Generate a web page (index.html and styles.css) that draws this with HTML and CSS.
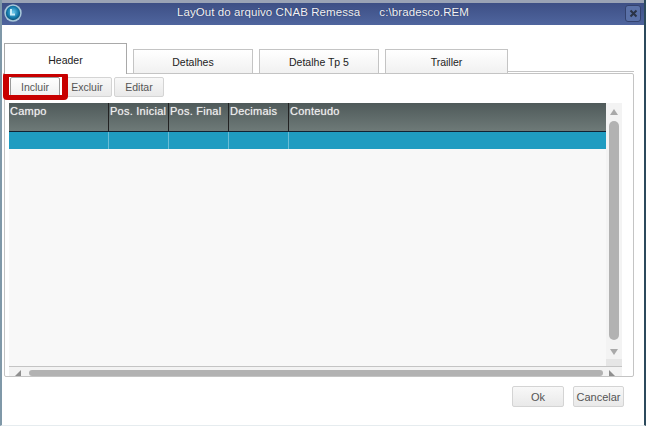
FILE: index.html
```html
<!DOCTYPE html>
<html lang="pt">
<head>
<meta charset="utf-8">
<title>LayOut do arquivo CNAB Remessa</title>
<link rel="stylesheet" href="styles.css">
</head>
<body>
<div class="window">
  <header class="titlebar">
    <svg class="logo" width="18" height="18" viewBox="0 0 18 18">
      <defs><radialGradient id="g" cx="50%" cy="45%" r="60%"><stop offset="0" stop-color="#6fcdf0"/><stop offset="0.65" stop-color="#1277a8"/><stop offset="1" stop-color="#0b4467"/></radialGradient></defs>
      <circle cx="9" cy="9" r="8.7" fill="#a9c8da"/>
      <circle cx="9" cy="9" r="7.2" fill="url(#g)"/>
      <path d="M7 5v5.5h4" fill="none" stroke="#c9ecf8" stroke-width="2"/>
    </svg>
    <span class="title">LayOut do arquivo CNAB Remessa<span class="path">c:\bradesco.REM</span></span>
    <span class="close"><svg width="9" height="9" viewBox="0 0 9 9"><path d="M1.5 1.5l6 6M7.5 1.5l-6 6" stroke="#2a3346" stroke-width="2"/></svg></span>
  </header>
  <main class="content">
    <nav class="tabs">
      <div class="tab active">Header</div>
      <div class="tab">Detalhes</div>
      <div class="tab">Detalhe Tp 5</div>
      <div class="tab trailer">Trailler</div>
    </nav>
    <section class="panel">
      <div class="toolbar">
        <button class="btn incluir">Incluir</button>
        <button class="btn">Excluir</button>
        <button class="btn">Editar</button>
        <div class="highlight"></div>
      </div>
      <div class="grid">
        <div class="grid-main">
          <div class="table">
            <div class="row head">
              <div class="c c1">Campo</div><div class="c c2">Pos. Inicial</div><div class="c c3">Pos. Final</div><div class="c c4">Decimais</div><div class="c c5">Conteudo</div>
            </div>
            <div class="row sel">
              <div class="c c1"></div><div class="c c2"></div><div class="c c3"></div><div class="c c4"></div><div class="c c5"></div>
            </div>
          </div>
          <div class="vscroll">
            <svg width="8" height="6" viewBox="0 0 8 6"><path d="M4 0l4 6H0z" fill="#a9a9a9"/></svg>
            <div class="vthumb"></div>
            <svg width="8" height="6" viewBox="0 0 8 6"><path d="M4 6l4-6H0z" fill="#a9a9a9"/></svg>
            <div class="vend"></div>
          </div>
        </div>
        <div class="hscroll">
          <svg width="6" height="6" viewBox="0 0 6 6"><path d="M0 6L6 0v6z" fill="#8f8f8f"/></svg>
          <div class="hthumb"></div>
          <svg width="6" height="6" viewBox="0 0 6 6"><path d="M0 0l6 6H0z" fill="#8f8f8f"/></svg>
        </div>
      </div>
    </section>
    <footer class="actions">
      <button class="btn ok">Ok</button>
      <button class="btn cancel">Cancelar</button>
    </footer>
  </main>
</div>
</body>
</html>
```
FILE: styles.css
```css
html, body { margin: 0; padding: 0; }
body { width: 648px; height: 426px; overflow: hidden; background: #fff; font-family: "Liberation Sans", Arial, sans-serif; }
.window { box-sizing: border-box; width: 646px; height: 426px; display: flex; flex-direction: column; background: #fff; border-left: 2px solid #7f98a8; border-right: 2px solid #2c4a5c; border-bottom: 1px solid #e6ecef; }
.titlebar { box-sizing: border-box; height: 25px; flex: none; display: flex; align-items: center; position: relative; background: linear-gradient(#3d4f85, #4f659e); border-top: 3px solid #9aa3b5; color: #fff; }
.logo { margin: -2px 0 0 2px; flex: none; }
.title { position: absolute; left: 175px; top: 2px; font-size: 11.5px; line-height: 15px; letter-spacing: 0.08px; color: #f2f3f7; white-space: nowrap; text-shadow: 0 0 1px #1d2850; }
.path { margin-left: 19px; letter-spacing: 0.1px; }
.close { box-sizing: border-box; position: absolute; right: 3px; top: 2px; width: 16px; height: 17px; display: flex; align-items: center; justify-content: center; border: 1px solid #33426e; border-radius: 3px; background: #5a71a8; }
.content { flex: 1; display: flex; flex-direction: column; padding: 18px 10px 0 2px; min-height: 0; }
.tabs { display: flex; align-items: flex-end; height: 30px; flex: none; gap: 6px; font-size: 10.5px; color: #222; position: relative; }
.tabs::after { content: ""; flex: 1; height: 1px; margin-left: -6px; margin-bottom: 1px; background: #c4c4c4; }
.tab { box-sizing: border-box; width: 120px; height: 24px; display: flex; align-items: center; justify-content: center; padding-top: 1px; border: 1px solid #c4c4c4; border-bottom: 0; background: linear-gradient(#fff, #f1f1f1); }
.tab.active { width: 123px; height: 31px; margin-bottom: -1px; padding-top: 1px; border-color: #a9a9a9; background: #fff; position: relative; z-index: 1; }
.tab.trailer { width: 123px; }
.panel { box-sizing: border-box; width: 630px; height: 304px; flex: none; display: flex; flex-direction: column; border: 1px solid #c4c4c4; border-radius: 0 2px 2px 2px; padding: 3px 11px 0 4px; }
.toolbar { display: flex; height: 20px; flex: none; position: relative; gap: 2px; margin-bottom: 6px; padding-left: 1px; }
.btn { box-sizing: border-box; width: 50px; height: 20px; padding: 0; border: 1px solid #d4d4d4; border-radius: 2px; background: linear-gradient(#f8f8f8, #e9e9e9); color: #555; font: 10.5px "Liberation Sans", Arial, sans-serif; }
.incluir { border-color: #9a9a9a; background: linear-gradient(#fff, #f0f0f0); }
.highlight { position: absolute; left: -6px; top: -5px; width: 65px; height: 28px; box-sizing: border-box; border-style: solid; border-width: 5px 6px; border-color: #c80000; border-radius: 4px; }
.grid { flex: 1; display: flex; flex-direction: column; min-height: 0; }
.grid-main { flex: 1; display: flex; min-height: 0; border-bottom: 1px solid #c4c4c4; }
.table { width: 597px; flex: none; background: #f8f8f8; }
.row { display: flex; }
.c { box-sizing: border-box; width: 60px; flex: none; border-right: 1px solid #d0d6d8; }
.c1 { width: 100px; }
.c5 { width: 317px; border-right: 0; }
.head { height: 28px; background: linear-gradient(#4f5a5a, #6e7a78); border-bottom: 1px solid #123; color: #f0f0f0; font-size: 11px; line-height: 16px; letter-spacing: 0.25px; text-shadow: 0 0 1px #bbb; }
.head .c { padding-left: 1px; border-right-color: #222; }
.sel { height: 17px; background: #1f9cc1; }
.sel .c { border-right-color: #69bcd5; }
.vscroll { width: 16px; background: #f3f3f3; display: flex; flex-direction: column; align-items: center; padding-top: 6px; }
.vthumb { width: 10px; height: 219px; margin: 6px 0 9px; flex: none; border-radius: 5px; background: #b2b2b2; }
.vscroll svg { flex: none; }
.vend { flex: 1; width: 100%; margin-top: 4px; background: #e6e6e6; }
.hscroll { height: 9px; flex: none; display: flex; align-items: flex-end; width: 613px; background: #f3f3f3; padding-left: 6px; box-sizing: border-box; }
.hthumb { width: 574px; height: 6px; margin: 0 6px 0 8px; border-radius: 3px; background: #b2b2b2; flex: none; }
.actions { display: flex; justify-content: flex-end; gap: 9px; padding-top: 9px; margin-right: 10px; }
.ok, .cancel { height: 21px; width: 52px; font-size: 11px; }
.cancel { width: 51px; }
```
